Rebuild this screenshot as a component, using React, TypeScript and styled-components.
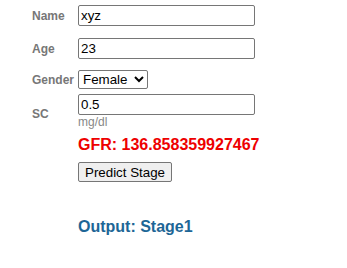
import * as React from 'react';
import styled, { createGlobalStyle } from 'styled-components';

const GlobalStyle = createGlobalStyle`
    body {
        margin: 0;
        background: #ffffff;
        font-family: 'Liberation Sans', Arial, sans-serif;
    }
`;

const Page = styled.div`
    padding: 5px 0 0 32px;
`;

const Form = styled.div`
    display: grid;
    grid-template-columns: 42px 177px;
    column-gap: 4px;
    align-items: center;
`;

type RowProps = {
    gap: number;
    drop?: number;
};

const Label = styled.label<RowProps>`
    font-size: 12px;
    font-weight: bold;
    color: #777777;
    margin-top: ${props => props.gap}px;
    padding-top: ${props => props.drop || 0}px;
    white-space: nowrap;
`;

const Field = styled.div<RowProps>`
    margin-top: ${props => props.gap}px;
    display: flex;
    flex-direction: column;
    align-items: flex-start;
`;

const TextInput = styled.input`
    box-sizing: border-box;
    width: 177px;
    height: 21px;
    padding: 1px 2px;
    border: 1px solid #767676;
    border-radius: 2px;
    font-family: 'Liberation Sans', Arial, sans-serif;
    font-size: 13.33px;
    color: #000000;
    background: #ffffff;
`;

const Select = styled.select`
    box-sizing: border-box;
    width: 70px;
    height: 19px;
    border: 1px solid #767676;
    border-radius: 2px;
    font-family: 'Liberation Sans', Arial, sans-serif;
    font-size: 13.33px;
    color: #000000;
    background: #ffffff;
`;

const Unit = styled.small`
    margin-top: 0;
    font-size: 12px;
    color: #888888;
`;

const Results = styled.div`
    padding-left: 46px;
`;

const Gfr = styled.div`
    margin-top: 7px;
    font-size: 16px;
    font-weight: bold;
    color: #ee0000;
`;

const Button = styled.button`
    margin-top: 8px;
    height: 20px;
    padding: 1px 6px;
    border: 1px solid #767676;
    border-radius: 2px;
    background: #efefef;
    font-family: 'Liberation Sans', Arial, sans-serif;
    font-size: 13.33px;
    color: #000000;
`;

const Output = styled.div`
    margin-top: 36px;
    font-size: 16px;
    font-weight: bold;
    color: #1d6696;
`;

export default function App() {
    return (
        <>
            <GlobalStyle />
            <Page>
                <Form>
                    <Label gap={0}>Name</Label>
                    <Field gap={0}>
                        <TextInput defaultValue="xyz" />
                    </Field>
                    <Label gap={12}>Age</Label>
                    <Field gap={12}>
                        <TextInput defaultValue="23" />
                    </Field>
                    <Label gap={11}>Gender</Label>
                    <Field gap={11}>
                        <Select defaultValue="Female">
                            <option>Male</option>
                            <option>Female</option>
                        </Select>
                    </Field>
                    <Label gap={5} drop={5}>SC</Label>
                    <Field gap={5}>
                        <TextInput defaultValue="0.5" />
                        <Unit>mg/dl</Unit>
                    </Field>
                </Form>
                <Results>
                    <Gfr>GFR: 136.858359927467</Gfr>
                    <Button>Predict Stage</Button>
                    <Output>Output: Stage1</Output>
                </Results>
            </Page>
        </>
    );
}
